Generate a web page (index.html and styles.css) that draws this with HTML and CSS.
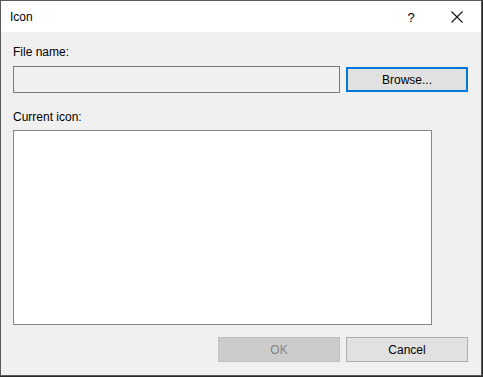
FILE: index.html
```html
<!DOCTYPE html>
<html lang="en">
<head>
    <meta charset="UTF-8">
    <title>Icon</title>
    <link rel="stylesheet" href="styles.css">
</head>
<body>
    <div class="window">
        <div class="titlebar">
            <span class="title">Icon</span>
            <div class="title-buttons">
                <span class="help">?</span>
                <svg class="close" width="12" height="12" viewBox="0 0 12 12">
                    <path d="M0.5 0.5 L11.5 11.5 M11.5 0.5 L0.5 11.5" stroke="#111" stroke-width="1.1" fill="none"/>
                </svg>
            </div>
        </div>

        <div class="content">
            <label class="label">File name:</label>
            <div class="file-row">
                <div class="textbox"></div>
                <button class="btn btn-default">Browse...</button>
            </div>

            <label class="label label-icon">Current icon:</label>
            <div class="icon-list"></div>

            <div class="footer">
                <button class="btn btn-disabled">OK</button>
                <button class="btn">Cancel</button>
            </div>
        </div>
    </div>
</body>
</html>
```

FILE: styles.css
```css
* {
    box-sizing: border-box;
    margin: 0;
    padding: 0;
}

body {
    background: #2b2b2b;
    font-family: 'Liberation Sans', Arial, sans-serif;
    font-size: 12px;
    color: #000;
}

.window {
    width: 482px;
    height: 376px;
    border: 1px solid #5a5a5a;
    background: #f0f0f0;
    display: flex;
    flex-direction: column;
}

.titlebar {
    height: 31px;
    background: #fff;
    display: flex;
    align-items: center;
    justify-content: space-between;
    padding-left: 9px;
}

.title {
    font-size: 12px;
    margin-top: 1px;
}

.title-buttons {
    display: flex;
    align-items: center;
    height: 100%;
}

.help {
    width: 46px;
    text-align: center;
    font-size: 13px;
    margin-top: 1px;
    margin-right: 1px;
}

.close {
    margin: 1px 18px 0 16px;
}

.content {
    flex: 1;
    padding: 13px 13px 0 12px;
    display: flex;
    flex-direction: column;
}

.label {
    display: block;
    height: 15px;
    line-height: 15px;
}

.file-row {
    display: flex;
    align-items: center;
    gap: 6px;
    margin-top: 6px;
}

.textbox {
    width: 327px;
    height: 27px;
    border: 1px solid #7a7a7a;
    background: #f0f0f0;
}

.btn {
    width: 122px;
    height: 25px;
    border: 1px solid #adadad;
    background: #e1e1e1;
    font-family: inherit;
    font-size: 12px;
    color: #000;
}

.btn-default {
    border: 2px solid #0078d7;
}

.btn-disabled {
    background: #cccccc;
    border-color: #bfbfbf;
    color: #838383;
}

.label-icon {
    margin-top: 17px;
}

.icon-list {
    width: 419px;
    height: 195px;
    margin-top: 5px;
    background: #fff;
    border: 1px solid #828790;
}

.footer {
    display: flex;
    justify-content: flex-end;
    gap: 6px;
    margin-top: 12px;
}
```
